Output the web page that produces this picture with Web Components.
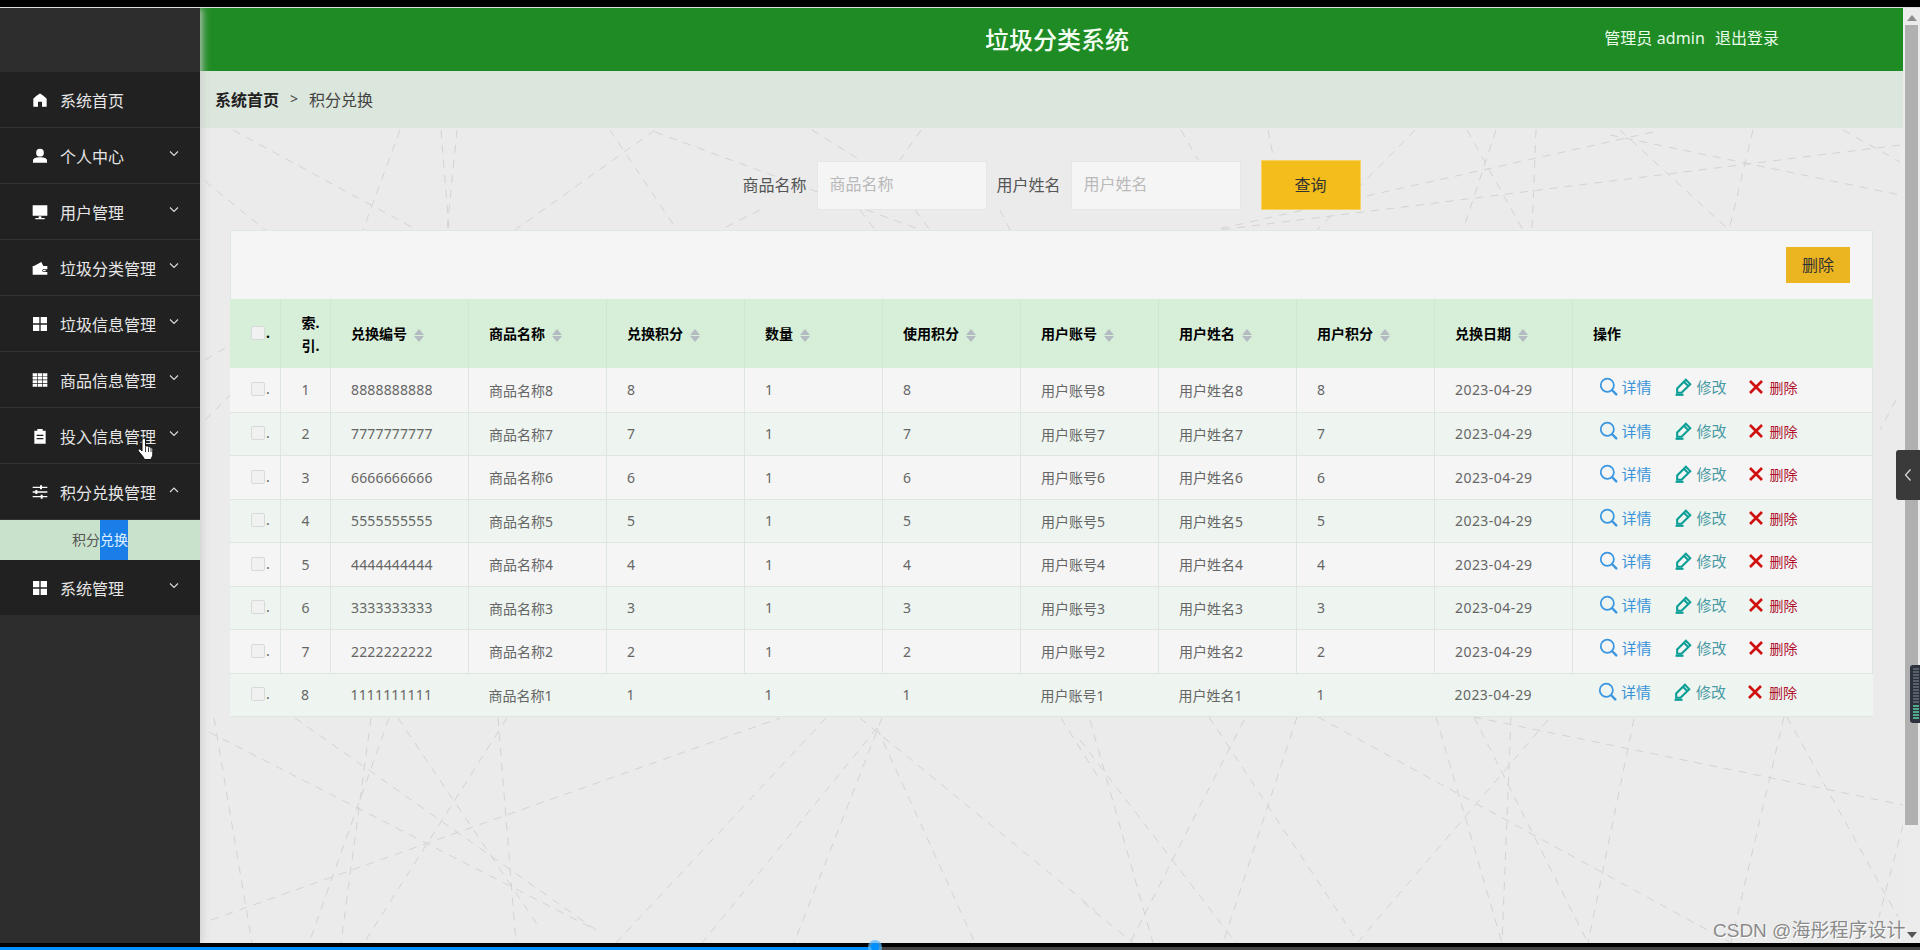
<!DOCTYPE html>
<html lang="zh-CN"><head><meta charset="utf-8"><title>垃圾分类系统</title>
<style>
html,body{margin:0;height:950px;overflow:hidden;background:#000;font-family:"Noto Sans","Noto Sans CJK SC",sans-serif}
</style></head><body>
<app-frame>
  <side-nav slot="nav">
    <nav-item icon="home" arrow="none">系统首页</nav-item>
    <nav-item icon="user">个人中心</nav-item>
    <nav-item icon="monitor">用户管理</nav-item>
    <nav-item icon="wallet">垃圾分类管理</nav-item>
    <nav-item icon="grid">垃圾信息管理</nav-item>
    <nav-item icon="table">商品信息管理</nav-item>
    <nav-item icon="clipboard">投入信息管理</nav-item>
    <nav-item icon="sliders" arrow="up">积分兑换管理</nav-item>
    <nav-sub>积分<mark-run>兑换</mark-run></nav-sub>
    <nav-item icon="grid" last>系统管理</nav-item>
  </side-nav>
  <top-bar slot="main" title-text="垃圾分类系统"></top-bar>
  <crumb-bar slot="main"></crumb-bar>
  <page-content slot="main">
    <search-form></search-form>
    <data-card></data-card>
  </page-content>
</app-frame>
<script>
const ICONS={
home:'<path fill="currentColor" d="M12 2.2C11 2.2 2.5 9 2 10.2V22h7v-7.5h6V22h7V10.2C21.5 9 13 2.2 12 2.2z"/>',
user:'<circle fill="currentColor" cx="12" cy="7" r="5.8"/><path fill="currentColor" d="M1.5 22v-3.2C1.5 15 7 14 12 14s10.500 1 10.500 4.800V22z"/>',
monitor:'<path fill="currentColor" d="M1 2h22v15.500H1zM10 18.500h4V21h5v1.800H5V21h5z"/>',
wallet:'<path fill="currentColor" fill-rule="evenodd" d="M1 9h2l11-6 3 6h6v5h-6.500a2.500 2.500 0 0 0 0 4H23v4H1zM16.500 15h4v2h-4z"/>',
grid:'<path fill="currentColor" d="M1.500 1.500h9.500V11H1.500zM13 1.500h9.500V11H13zM1.500 13H11v9.500H1.500zM13 13h9.500v9.500H13z"/>',
table:'<path fill="currentColor" d="M1 2h6.700v4.200H1zM8.700 2h6.600v4.200H8.700zM16.300 2H23v4.200h-6.700zM1 7.200h6.700v4.200H1zM8.700 7.200h6.600v4.200H8.700zM16.300 7.200H23v4.200h-6.700zM1 12.400h6.700v4.200H1zM8.700 12.400h6.600v4.200H8.700zM16.300 12.400H23v4.200h-6.700zM1 17.600h6.700V22H1zM8.700 17.600h6.600V22H8.700zM16.300 17.600H23V22h-6.700z"/>',
clipboard:'<path fill="currentColor" fill-rule="evenodd" d="M3.500 4H8V1.500h8V4h4.500v19.500h-17zM7 10v2h10v-2zM7 15v2h10v-2z"/>',
sliders:'<path fill="currentColor" d="M1 4h11V2h3v2h8v2h-8v2h-3V6H1zM1 11h4V9h3v2h15v2H8v2H5v-2H1zM1 18h12v-2h3v2h7v2h-7v2h-3v-2H1z"/>',
search:'<circle fill="none" stroke="currentColor" stroke-width="2.200" cx="10.500" cy="10.500" r="8.300"/><path fill="none" stroke="currentColor" stroke-width="3" stroke-linecap="round" d="M17 17l4.800 5"/>',
pencil:'<path fill="none" stroke="currentColor" stroke-width="2.600" d="M4 14.500 15 3.500l5.500 5.500L9.500 20H4zM12.500 6l5.500 5.500"/><path fill="none" stroke="currentColor" stroke-width="2.600" d="M2 22.500h10"/>',
cross:'<path fill="none" stroke="currentColor" stroke-width="4" d="M3 3l18 18M21 3L3 21"/>'
};
function def(name,css,html,extra){
  customElements.define(name,class extends HTMLElement{
    constructor(){super();const r=this.attachShadow({mode:'open'});
      r.innerHTML='<style>'+css+'</style>'+(typeof html==='function'?html(this):html);}
    connectedCallback(){if(extra)extra(this);}
  });
}
def('ui-icon',':host{display:inline-flex;flex:none;width:var(--s,14px);height:var(--s,14px)}svg{width:100%;height:100%;display:block}','<svg viewBox="0 0 24 24"></svg>',
  el=>{el.shadowRoot.querySelector('svg').innerHTML=ICONS[el.getAttribute('name')]||'';});

def('app-frame',`
:host{display:flex;flex-direction:column;width:1920px;height:950px;position:relative;overflow:hidden}
.top{height:7px;background:#000;flex:none;border-bottom:1px solid #ddd;position:relative;z-index:3}
.mid{flex:1;display:flex;min-height:0}
.navw{width:200px;flex:none;display:flex;position:relative;z-index:2;box-shadow:2px 0 8px rgba(205,205,205,.95)}
.mainw{flex:1;min-width:0;display:flex;flex-direction:column}
.rail{width:17px;flex:none;background:#ececec;display:flex;flex-direction:column;align-items:center;position:relative;z-index:2}
.up,.down{width:0;height:0;border:5px solid transparent}
.up{border-bottom:6px solid #8d8d8d;border-top:0;margin-top:7px;margin-bottom:4px}
.thumb{width:13px;height:800px;background:#b0b0b0;margin-left:-1px}
.sp{flex:1}
.down{border-top:6px solid #555;border-bottom:0;margin-bottom:5px}
.base{height:7px;flex:none;background:linear-gradient(#000 0 4px,#0090ff 4px);position:relative;z-index:3}
.base::after{content:"";position:absolute;left:875px;right:0;top:4px;bottom:0;background:#444}
.knob{position:absolute;left:868px;top:-3px;width:14px;height:14px;border-radius:50%;background:rgba(90,185,255,.75);z-index:2}
.knob::after{content:"";position:absolute;left:3px;top:3px;width:8px;height:8px;border-radius:50%;background:#0090ff}
.handle{position:absolute;right:0;top:450px;width:24px;height:50px;background:#3a3a3a;border-radius:3px 0 0 3px;z-index:4;display:flex;align-items:center;padding-left:8px;box-sizing:border-box}
.handle svg{width:8px;height:14px}
.grip{position:absolute;right:0;top:665px;width:10px;height:58px;z-index:4;background:#2c333e;border-radius:3px 0 0 3px}
.grip svg{display:block;width:10px;height:58px}
.mark{position:absolute;left:1713px;top:918px;font:19px/26px "Liberation Sans","Noto Sans CJK SC",sans-serif;color:#8a8a8a;text-shadow:1px 1px 0 #fff;z-index:4;white-space:nowrap}
.hand{position:absolute;left:137px;top:437px;width:17px;height:24px;z-index:5}
`,`<div class="top"></div>
<div class="mid"><div class="navw"><slot name="nav"></slot></div><div class="mainw"><slot name="main"></slot></div>
<div class="rail"><div class="up"></div><div class="thumb"></div><div class="sp"></div><div class="down"></div></div></div>
<div class="base"><div class="knob"></div></div>
<div class="handle"><svg viewBox="0 0 8 14"><path d="M6.500 1.500 1.500 7l5 5.500" fill="none" stroke="#ddd" stroke-width="1.200"/></svg></div>
<div class="grip"><svg viewBox="0 0 10 58"><path d="M3 4h6M3 7h6M3 10h6M3 13h6M3 16h6M3 19h6M3 22h6M3 25h6M3 28h6M3 31h6M3 34h6M3 37h6" stroke="#67707c" stroke-width="1.300"/><path d="M3 41h6M3 44h6M3 47h6M3 50h6M3 53h6" stroke="#5fd0a5" stroke-width="1.300"/></svg></div>
<svg class="hand" viewBox="0 0 17 24"><path d="M6 1.500c1.200-.8 2.500 0 2.500 1.500v6.300c1.500-.8 2.700-.3 3 .6 1-.4 2.100 0 2.300.9 1-.3 2 .4 2 1.700v4.500c0 2.500-1.200 3.500-2 5.500H7.500C6 19 4 17.500 1.300 14c-.8-1.300.6-2.600 2-1.600L5 14V3c0-.6.300-1.200 1-1.500z" fill="#fff" stroke="#111" stroke-width="1"/><path d="M8.500 10v5M11.500 10.500V15M14 11v4" stroke="#111" stroke-width=".8"/></svg>
<div class="mark">CSDN @海彤程序设计</div>`);

def('side-nav',`:host{display:block;width:200px;background:#2d2d2d}.logo{height:64px;background:#2d2d2d}.list{background:#212121}`,
 '<div class="logo"></div><div class="list"><slot></slot></div>');

def('nav-item',`
:host{display:flex;align-items:center;height:56px;box-sizing:border-box;padding:0 0 0 32px;border-bottom:1px solid #343434;color:#e6e6e6;font-size:16px;position:relative;--s:16px}
:host([last]){border-bottom:0;height:55px}
ui-icon{margin-right:12px;color:#fff}
.ch{position:absolute;left:169px;top:22px;width:10px;height:7px}
`,el=>{const a=el.getAttribute('arrow');const d=a==='up'?'M1 6l4-4 4 4':'M1 1.500l4 4 4-4';
 return `<ui-icon name="${el.getAttribute('icon')}"></ui-icon><slot></slot>`+(a==='none'?'':`<svg class="ch" viewBox="0 0 10 7"><path d="${d}" fill="none" stroke="#ddd" stroke-width="1.100"/></svg>`)});

def('nav-sub',`:host{display:flex;justify-content:center;height:40px;line-height:40px;background:#c9e2cb;color:#555;font-size:14px;position:relative}`,'<slot></slot>');
def('mark-run',`:host{display:inline-block;height:40px;line-height:40px;background:#1a7ee8;color:#dff0ff}`,'<slot></slot>');

def('top-bar',`
:host{display:grid;grid-template-columns:1fr auto 1fr;align-items:center;height:63px;background:#1f8b24;color:#fff;padding-left:11px;box-sizing:border-box;flex:none}
h1{margin:0;font-size:24px;font-weight:500;line-height:34px;grid-column:2;color:#f4fff4}
.r{justify-self:end;padding-right:124px;font-size:16px;line-height:22px;margin-top:-4px;display:flex;gap:10px;color:#eafbea}
.r span:first-child{letter-spacing:.1px}
`,el=>`<h1>${el.getAttribute('title-text')}</h1><div class="r"><span>管理员 admin</span><span>退出登录</span></div>`);

def('crumb-bar',`
:host{display:flex;align-items:center;height:57px;box-sizing:border-box;background:#dbe6dc;padding:0 0 2px 15px;font-size:16px;color:#444;flex:none}
b{color:#222;font-weight:700}
i{font-style:normal;font-size:14px;margin:0 11px 0 11px;color:#444}
`,'<b>系统首页</b><i>&gt;</i><span>积分兑换</span>');

const L=[[233,130,417,230],[400,130,363,230],[441,130,449,230],[457,130,447,230],[610,130,677,230],[655,130,515,230],[655,132,921,230],[812,130,860,160],[921,130,900,160],[860,210,875,230],[760,210,720,230],[1000,210,1010,230],[915,210,930,230],[1181,130,1198,160],[1268,130,1274,160],[1415,130,1317,230],[1467,130,1523,230],[1496,130,1463,230],[1536,130,1532,230],[1610,135,1900,195],[1653,132,1214,230],[1900,145,1219,230],[1620,130,1729,230],[1753,130,1729,230],[1843,130,1900,162],[205,181,265,230],[1896,400,1880,430],[205,360,230,345],[205,420,230,395],
[211,920,780,718],[209,732,596,930],[295,718,596,930],[398,718,541,930],[389,718,309,943],[371,718,341,943],[507,718,364,943],[498,718,516,943],[214,718,252,943],[826,718,616,943],[877,728,702,943],[882,718,794,943],[860,718,1095,910],[877,728,975,943],[1061,718,1100,780],
[1090,720,1153,943],[1244,720,1130,943],[1209,717,1358,942],[1297,717,1223,943],[1080,740,1236,943],[1318,717,1731,943],[1436,717,1502,943],[1548,720,1358,942],[1511,717,1502,943],[1474,717,1588,943],[1474,717,1903,805],[1634,719,1588,943],[1784,717,1731,943],[1787,717,1898,917],[1903,825,1879,917],[1083,902,1133,943]];
def('page-content',`
:host{display:block;flex:1;min-height:0;position:relative;background:#ebebeb;padding:32px 30px 0;box-sizing:border-box;overflow:hidden}
svg{position:absolute;left:0;top:0;width:1703px;height:815px}
.c{position:relative}
`,`<svg viewBox="200 128 1703 815">${L.map(l=>`<line x1="${l[0]}" y1="${l[1]}" x2="${l[2]}" y2="${l[3]}"/>`).join('')}<style>line{stroke:#d3d3d3;stroke-width:1;stroke-dasharray:8 7}</style></svg><div class="c"><slot></slot></div>`);

def('search-field',`
:host{display:flex;align-items:center;gap:10px}
label{font-size:16px;color:#555;padding-bottom:2px}
input{width:170px;height:49px;box-sizing:border-box;padding:0 0 2px 12px;background:#f5f5f5;border:1px solid #e6e6e6;font:16px "Noto Sans","Noto Sans CJK SC",sans-serif;color:#555;outline:0;margin:0}
input::placeholder{color:#b9b9b9;opacity:1}
`,el=>{const t=el.getAttribute('label');return `<label>${t}</label><input placeholder="${t}">`});
def('search-form',`
:host{display:flex;justify-content:center;align-items:center;gap:10px;height:50px;margin-bottom:20px}
button{width:100px;height:50px;margin-left:10px;background:#f3bd1b;border:1px solid #f6d266;color:#333;font:16px "Noto Sans","Noto Sans CJK SC",sans-serif;padding:0 0 3px}
`,'<search-field label="商品名称"></search-field><search-field label="用户姓名"></search-field><button>查询</button>');

const COLS=['兑换编号','商品名称','兑换积分','数量','使用积分','用户账号','用户姓名','用户积分','兑换日期'];
const ROWS=[['8888888888',8],['7777777777',7],['6666666666',6],['5555555555',5],['4444444444',4],['3333333333',3],['2222222222',2],['1111111111',1]];
def('sort-caret',`:host{display:inline-flex;flex-direction:column;gap:1px;margin-left:7px;vertical-align:middle}
i{display:block;width:0;height:0;border:5px solid transparent}
.u{border-bottom:6px solid #b4bbc2;border-top:0}.d{border-top:6px solid #b4bbc2;border-bottom:0}`,'<i class="u"></i><i class="d"></i>');
def('check-box',`:host{display:inline-flex;align-items:center;font-size:14px}
i{display:block;width:12px;height:12px;border:1px solid #d6dbd7;border-radius:2px;background:#f1f1f1;margin:1px 1px 0 0}`,'<i></i><span>.</span>');
def('row-action',`:host{display:inline-flex;align-items:center;--s:19px;font-size:15px;margin-top:-4px}
ui-icon{margin-right:var(--g,4px);color:var(--ic)}span{color:var(--tc)}`,el=>`<ui-icon name="${el.getAttribute('icon')}"></ui-icon><span><slot></slot></span>`);
def('data-card',`
:host{display:block;background:#f5f5f5;box-shadow:0 0 0 1px #dfe8df inset}
.bar{height:69px;display:flex;justify-content:flex-end;align-items:flex-start;padding:17px 23px 0 0;box-sizing:border-box}
.bar button{width:64px;height:36px;background:#ebb421;border:0;color:#333;font:16px "Noto Sans","Noto Sans CJK SC",sans-serif;padding:0 0 3px}
table{border-collapse:collapse;table-layout:fixed;width:1643px;font-size:14px;color:#666}
th,td{box-sizing:border-box;padding:0 0 0 20.5px;text-align:left;white-space:nowrap;font-weight:400}
th{height:69px;background:#d7eed8;color:#000;font-weight:700;border-right:1px solid #cfe6d0;line-height:23px}
td{border-right:1px solid #dde6df;border-bottom:1px solid #dde6df}
tr:last-child td,th:last-child{border-right:0}
tbody tr:nth-child(odd) td{height:44px;background:#f5f5f5}
tbody tr:nth-child(even) td{height:43px;background:#eef5f0}
.ck{padding-left:21px}
th.ix{padding-left:21px}td.ix{padding-left:21px}
.code{letter-spacing:.15px}.date{letter-spacing:.45px}
.ops{padding-left:26px}
.ops row-action:nth-child(1){--ic:#3a96e0;--tc:#3a93d8;margin-right:22px}
.ops row-action:nth-child(2){--ic:#089d95;--tc:#4a9aa4;--g:4px;margin-right:21px}
.ops row-action:nth-child(3){--ic:#d00f0f;--tc:#b0102c;font-size:14px;--s:16px;--g:6px;vertical-align:1px}
`,`<div class="bar"><button>删除</button></div><table><colgroup><col style="width:50px"><col style="width:50px">${COLS.map(()=>'<col style="width:138px">').join('')}<col></colgroup>
<thead><tr><th class="ck"><check-box></check-box></th><th class="ix">索.<br>引.</th>${COLS.map(c=>`<th>${c}<sort-caret></sort-caret></th>`).join('')}<th>操作</th></tr></thead>
<tbody>${ROWS.map((r,i)=>`<tr><td class="ck"><check-box></check-box></td><td class="ix">${i+1}</td><td class="code">${r[0]}</td><td>商品名称${r[1]}</td><td>${r[1]}</td><td>1</td><td>${r[1]}</td><td>用户账号${r[1]}</td><td>用户姓名${r[1]}</td><td>${r[1]}</td><td class="date">2023-04-29</td><td class="ops"><row-action icon="search">详情</row-action><row-action icon="pencil">修改</row-action><row-action icon="cross">删除</row-action></td></tr>`).join('')}</tbody></table>`);
</script>
</body></html>
